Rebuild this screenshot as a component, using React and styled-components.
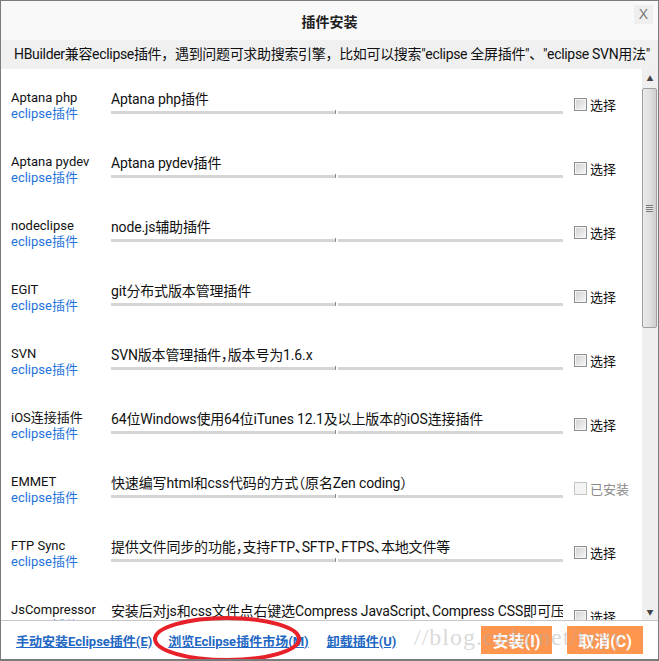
import React from "react";
import styled, { createGlobalStyle } from "styled-components";

const GlobalStyle = createGlobalStyle`
  html, body {
    margin: 0;
    padding: 0;
    background: #fff;
  }
  body {
    font-family: Roboto, "Noto Sans CJK SC", sans-serif;
    font-feature-settings: "halt";
  }
`;

const plugins = [
  { name: "Aptana php", desc: "Aptana php插件" },
  { name: "Aptana pydev", desc: "Aptana pydev插件" },
  { name: "nodeclipse", desc: "node.js辅助插件" },
  { name: "EGIT", desc: "git分布式版本管理插件" },
  { name: "SVN", desc: "SVN版本管理插件，版本号为1.6.x" },
  { name: "iOS连接插件", desc: "64位Windows使用64位iTunes 12.1及以上版本的iOS连接插件" },
  { name: "EMMET", desc: "快速编写html和css代码的方式（原名Zen coding）", installed: true },
  { name: "FTP Sync", desc: "提供文件同步的功能，支持FTP、SFTP、FTPS、本地文件等" },
  {
    name: "JsCompressor",
    desc: "安装后对js和css文件点右键选Compress JavaScript、Compress CSS即可压缩",
  },
];

const Window = styled.div`
  position: relative;
  width: 659px;
  height: 661px;
  box-sizing: border-box;
  border: 1px solid #7b7b7b;
  border-bottom-width: 2px;
  display: flex;
  flex-direction: column;
  background: #fff;
  overflow: hidden;
`;

const TitleBar = styled.div`
  height: 39px;
  flex: none;
  background: #f9f9f9;
  display: grid;
  grid-template-columns: 1fr auto 1fr;
  align-items: center;
`;

const Title = styled.h1`
  grid-column: 2;
  margin: 0;
  font-size: 14px;
  font-weight: bold;
  color: #1e1e1e;
`;

const CloseButton = styled.span`
  justify-self: end;
  align-self: start;
  margin: 4px 5px 0 0;
  width: 19px;
  height: 19px;
  background: #efefef;
  color: #777;
  font-family: "Liberation Sans", sans-serif;
  font-size: 14px;
  line-height: 19px;
  text-align: center;
`;

const InfoBar = styled.div`
  height: 29px;
  flex: none;
  background: #f0f0f0;
  padding-left: 13px;
  font-size: 14px;
  line-height: 29px;
  font-feature-settings: normal;
  letter-spacing: -0.32px;
  color: #111;
  white-space: nowrap;
  overflow: hidden;
`;

const Body = styled.div`
  flex: 1;
  display: flex;
  min-height: 0;
`;

const List = styled.div`
  flex: 1;
  overflow: hidden;
  padding-top: 20px;
`;

const Row = styled.div`
  height: 64px;
  display: grid;
  grid-template-columns: 100px 452px auto;
  align-items: start;
  padding-left: 10px;
`;

const NameCell = styled.div`
  font-size: 13px;
  line-height: 16px;
  padding-top: 1px;
  color: #111;
  white-space: nowrap;
`;

const Source = styled.div`
  color: #1f74dc;
`;

const DescCell = styled.div`
  font-size: 14px;
  line-height: 20px;
  letter-spacing: -0.15px;
  color: #111;
  white-space: nowrap;
  overflow: hidden;
`;

const Track = styled.div`
  display: flex;
  align-items: center;
  height: 3px;
  margin-top: 2px;
`;

const TrackPart = styled.div`
  height: 3px;
  background: #d5d5d5;
  flex: ${({ $grow }) => $grow};
`;

const Tick = styled.div`
  width: 1px;
  height: 5px;
  margin: 0 2px 0 0;
  background: #8c8c8c;
`;

const Check = styled.label`
  display: flex;
  align-items: center;
  gap: 3px;
  margin: 6px 0 0 11px;
  font-size: 13px;
  color: ${({ $disabled }) => ($disabled ? "#8a8a8a" : "#111")};
  white-space: nowrap;
`;

const Box = styled.span`
  width: 11px;
  height: 11px;
  border: 1px solid ${({ $disabled }) => ($disabled ? "#c4c4c4" : "#8e8f8f")};
  box-shadow: inset 0 0 0 1px #f4f4f4;
  background: ${({ $disabled }) =>
    $disabled
      ? "#f4f4f4"
      : "linear-gradient(135deg, #cfcfcf 0%, #e8e8e8 60%, #f7f7f7 100%)"};
`;

const ScrollBar = styled.div`
  width: 16px;
  flex: none;
  background: #efefef;
  display: flex;
  flex-direction: column;
`;

const Arrow = styled.div`
  height: 17px;
  flex: none;
  display: flex;
  align-items: center;
  justify-content: center;
  color: #444;
  font-size: 7px;
`;

const Thumb = styled.div`
  margin: 2px 1px 0 0;
  height: 238px;
  border: 1px solid #9f9f9f;
  border-radius: 2px;
  background: linear-gradient(90deg, #eaeaea 0%, #e0e0e0 50%, #cfcfcf 100%);
  display: flex;
  align-items: center;
  justify-content: center;
`;

const Grip = styled.div`
  width: 7px;
  height: 7px;
  background: repeating-linear-gradient(
    180deg,
    #777 0,
    #777 1px,
    #e8e8e8 1px,
    #e8e8e8 2px
  );
`;

const Spacer = styled.div`
  flex: 1;
`;

const Footer = styled.div`
  position: relative;
  height: 38px;
  flex: none;
  border-top: 1px solid #c6c6c6;
  display: flex;
  align-items: center;
  padding: 0 15px 0 15px;
`;

const Link = styled.a`
  font-size: 13px;
  font-weight: bold;
  color: #2267c3;
  text-decoration: underline;
  white-space: nowrap;
  margin-right: ${({ $gap }) => $gap}px;
`;

const Buttons = styled.div`
  margin-left: auto;
  display: flex;
  gap: 15px;
  align-self: flex-start;
  margin-top: 5px;
`;

const Button = styled.button`
  width: ${({ $w }) => $w}px;
  height: 28px;
  border: none;
  padding: 0;
  background: #ff9650;
  color: #fff;
  font-family: inherit;
  font-size: 16px;
  font-weight: bold;
`;

const Watermark = styled.span`
  position: absolute;
  left: 413px;
  top: 3px;
  font-family: "Liberation Serif", serif;
  font-size: 24px;
  letter-spacing: 1px;
  color: rgba(170, 170, 170, 0.45);
  pointer-events: none;
  white-space: nowrap;
`;

const Circle = styled.svg`
  position: absolute;
  left: 150px;
  top: -6px;
  overflow: visible;
  pointer-events: none;
`;

export default function App() {
  return (
    <>
      <GlobalStyle />
      <Window>
        <TitleBar>
          <Title>插件安装</Title>
          <CloseButton>X</CloseButton>
        </TitleBar>
        <InfoBar>
          HBuilder兼容eclipse插件，遇到问题可求助搜索引擎，比如可以搜索"eclipse 全屏插件"、"eclipse SVN用法"
        </InfoBar>
        <Body>
          <List>
            {plugins.map((p) => (
              <Row key={p.name}>
                <NameCell>
                  {p.name}
                  <Source>eclipse插件</Source>
                </NameCell>
                <DescCell>
                  {p.desc}
                  <Track>
                    <TrackPart $grow={224} />
                    <Tick />
                    <TrackPart $grow={225} />
                  </Track>
                </DescCell>
                <Check $disabled={p.installed}>
                  <Box $disabled={p.installed} />
                  {p.installed ? "已安装" : "选择"}
                </Check>
              </Row>
            ))}
          </List>
          <ScrollBar>
            <Arrow>▲</Arrow>
            <Thumb>
              <Grip />
            </Thumb>
            <Spacer />
            <Arrow>▼</Arrow>
          </ScrollBar>
        </Body>
        <Footer>
          <Link $gap={16}>手动安装Eclipse插件(E)</Link>
          <Link $gap={18}>浏览Eclipse插件市场(M)</Link>
          <Link $gap={0}>卸载插件(U)</Link>
          <Buttons>
            <Button $w={71}>安装(I)</Button>
            <Button $w={76}>取消(C)</Button>
          </Buttons>
          <Watermark>//blog.csdn.net/tyyy</Watermark>
          <Circle width="150" height="48" viewBox="0 0 150 48">
            <ellipse cx="76" cy="24" rx="72" ry="21" fill="none" stroke="#e8202a" strokeWidth="4" />
          </Circle>
        </Footer>
      </Window>
    </>
  );
}
